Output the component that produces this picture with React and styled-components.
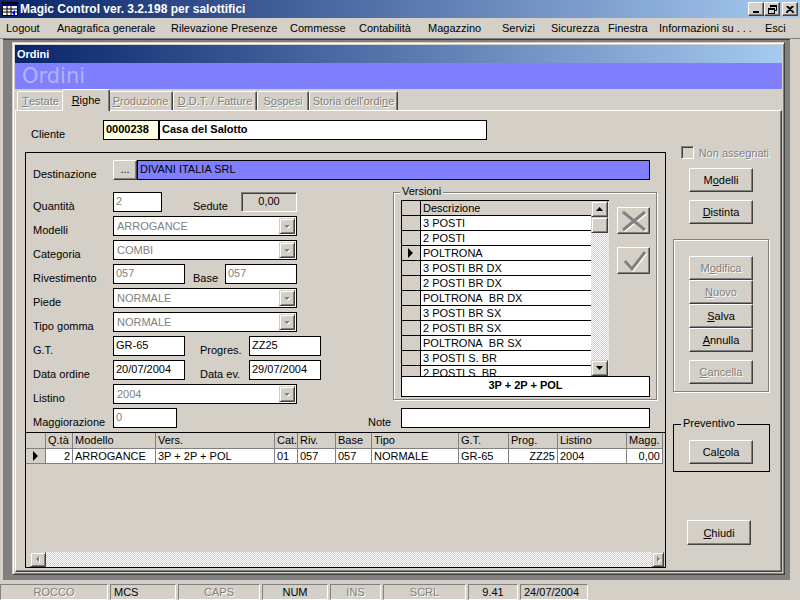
import React from "react";
import styled, { createGlobalStyle } from "styled-components";

const GlobalStyle = createGlobalStyle`
  html, body { margin: 0; padding: 0; background: #d4d0c8; }
  body { font-family: "Liberation Sans", Arial, sans-serif; font-size: 11px; color: #000; }
  * { box-sizing: border-box; }
  u { text-decoration: underline; text-underline-offset: 1px; }
`;

const Accel = ({ t, i }) =>
  i == null ? t : (<>{t.slice(0, i)}<u>{t[i]}</u>{t.slice(i + 1)}</>);

const Screen = styled.div`
  width: 800px;
  height: 600px;
  display: flex;
  flex-direction: column;
  overflow: hidden;
  background: #d4d0c8;
`;

const TitleBar = styled.div`
  height: 18px;
  display: flex;
  align-items: center;
  padding: 0 2px;
  background: linear-gradient(to right, #0a246a, #a6caf0);
`;

const TitleText = styled.div`
  flex: 1;
  margin-left: 2px;
  color: #fff;
  font-weight: bold;
  font-size: 12px;
  white-space: nowrap;
`;

const CapButton = styled.div`
  width: 16px;
  height: 14px;
  margin-left: ${p => p.$gap || 0}px;
  display: flex;
  align-items: center;
  justify-content: center;
  background: #d4d0c8;
  border: 1px solid;
  border-color: #fff #404040 #404040 #fff;
  box-shadow: inset -1px -1px #808080;
`;

const MenuBar = styled.div`
  height: 21px;
  display: flex;
  align-items: center;
  border-bottom: 1px solid #808080;
`;

const MenuItem = styled.div`
  width: ${p => p.$w}px;
  padding-left: 6px;
  white-space: nowrap;
`;

const MdiArea = styled.div`
  flex: 1;
  display: flex;
  margin: 0 10px 0 3px;
  padding: 2px 5px 5px 9px;
  background: #808080;
  border-top: 1px solid #404040;
`;

const ChildWindow = styled.div`
  flex: 1;
  display: flex;
  flex-direction: column;
  padding: 2px;
  background: #d4d0c8;
  border: 1px solid;
  border-color: #d4d0c8 #404040 #404040 #d4d0c8;
  box-shadow: inset 1px 1px #fff, inset -1px -1px #808080;
`;

const ChildTitle = styled.div`
  height: 18px;
  padding-left: 2px;
  display: flex;
  align-items: center;
  color: #fff;
  font-weight: bold;
  background: linear-gradient(to right, #0a246a, #a6caf0);
`;

const Band = styled.div`
  height: 26px;
  padding-left: 7px;
  background: #8080ff;
  color: #b2b2ff;
  font-family: "DejaVu Sans", sans-serif;
  font-size: 21px;
  line-height: 26px;
`;

const TabStrip = styled.div`
  height: 21px;
  display: flex;
  align-items: flex-end;
  padding-left: 2px;
`;

const Tab = styled.div`
  position: relative;
  width: ${p => p.$w}px;
  height: ${p => (p.$active ? 22 : 19)}px;
  margin: 0 ${p => (p.$active ? -2 : 0)}px ${p => (p.$active ? -1 : 0)}px;
  z-index: ${p => (p.$active ? 1 : 0)};
  display: flex;
  align-items: ${p => (p.$active ? "flex-start" : "center")};
  padding-top: ${p => (p.$active ? 4 : 0)}px;
  justify-content: center;
  white-space: nowrap;
  background: #d4d0c8;
  border: 1px solid;
  border-bottom: none;
  border-color: #fff #404040 transparent #fff;
  border-radius: 2px 2px 0 0;
  box-shadow: inset -1px 0 #808080;
  color: ${p => (p.$active ? "#000" : "#808080")};
  text-shadow: ${p => (p.$active ? "none" : "1px 1px 0 #fff")};
`;

const Page = styled.div`
  flex: 1;
  display: flex;
  flex-direction: column;
  padding: 9px 0 0 9px;
  border: 1px solid;
  border-color: #fff #404040 #404040 #fff;
  box-shadow: inset -1px -1px #808080;
`;

const Row = styled.div`
  display: flex;
  height: ${p => p.$h || 20}px;
  margin-top: ${p => p.$mt || 0}px;
  padding-left: ${p => p.$pl || 0}px;
  padding-right: ${p => p.$pr || 0}px;
`;

const Label = styled.div`
  width: ${p => p.$w}px;
  margin-left: ${p => p.$ml || 0}px;
  padding-top: 8px;
  line-height: 13px;
  white-space: nowrap;
`;

const Field = styled.div`
  width: ${p => p.$w}px;
  height: 20px;
  margin-left: ${p => p.$ml || 0}px;
  padding: 2px 0 0 2px;
  line-height: 13px;
  border: 1px solid #000;
  background: ${p => p.$bg || "#fff"};
  color: ${p => (p.$dim ? "#808080" : "#000")};
  font-weight: ${p => (p.$bold ? "bold" : "normal")};
  white-space: nowrap;
  overflow: hidden;
`;

const Readout = styled.div`
  width: ${p => p.$w}px;
  height: 20px;
  padding-top: 2px;
  text-align: center;
  line-height: 13px;
  border: 1px solid;
  border-color: #808080 #fff #fff #808080;
  box-shadow: inset 1px 1px #404040;
`;

const ComboBox = styled.div`
  width: ${p => p.$w}px;
  height: 20px;
  display: flex;
  justify-content: space-between;
  padding: 1px;
  border: 1px solid #000;
  background: #fff;
  color: #808080;
`;

const ComboText = styled.div`
  padding: 2px 0 0 2px;
  line-height: 13px;
`;

const ComboArrow = styled.div`
  width: 16px;
  height: 16px;
  display: flex;
  align-items: center;
  justify-content: center;
  background: #d4d0c8;
  border: 1px solid;
  border-color: #d4d0c8 #404040 #404040 #d4d0c8;
  box-shadow: inset 1px 1px #fff, inset -1px -1px #808080;
`;

const MainRow = styled.div`
  display: flex;
  margin-top: 6px;
`;

const LeftBox = styled.div`
  width: 641px;
  height: 416px;
  margin-top: 6px;
  display: flex;
  flex-direction: column;
  border: 1px solid #000;
`;

const DotsButton = styled.div`
  width: 24px;
  height: 20px;
  display: flex;
  align-items: center;
  justify-content: center;
  padding-bottom: 3px;
  background: #d4d0c8;
  border: 1px solid;
  border-color: #fff #404040 #404040 #fff;
  box-shadow: inset -1px -1px #808080;
`;

const MidRow = styled.div`
  display: flex;
  height: 219px;
  margin-top: 5px;
`;

const FormCol = styled.div`
  width: 367px;
  padding: 7px 0 0 7px;
  display: flex;
  flex-direction: column;
  gap: 4px;
`;

const GroupBox = styled.div`
  position: relative;
  width: ${p => p.$w}px;
  height: ${p => (p.$h ? `${p.$h}px` : "auto")};
  margin-top: ${p => p.$mt || 0}px;
  padding: ${p => p.$pad};
  display: flex;
  flex-direction: column;
  border: 1px solid ${p => (p.$black ? "#000" : "#808080")};
  box-shadow: ${p => (p.$black ? "none" : "inset 1px 1px #fff, 1px 1px #fff")};
`;

const Legend = styled.div`
  position: absolute;
  top: -8px;
  left: ${p => p.$left}px;
  padding: 0 2px;
  line-height: 13px;
  background: #d4d0c8;
`;

const VersTop = styled.div`
  display: flex;
  height: 176px;
`;

const List = styled.div`
  width: 208px;
  display: flex;
  overflow: hidden;
  border-top: 1px solid #000;
  border-left: 1px solid #000;
`;

const ListBody = styled.div`
  flex: 1;
  display: flex;
  flex-direction: column;
`;

const ListRow = styled.div`
  display: flex;
  flex: none;
  height: 15px;
  border-bottom: 1px solid #000;
`;

const Indicator = styled.div`
  width: ${p => p.$w || 19}px;
  flex: none;
  display: flex;
  align-items: center;
  justify-content: center;
  background: #d4d0c8;
  border-right: 1px solid ${p => p.$line || "#000"};
  border-bottom: ${p => (p.$under ? "1px solid #808080" : "none")};
`;

const ListCell = styled.div`
  flex: 1;
  padding-left: 2px;
  line-height: 14px;
  white-space: nowrap;
  background: ${p => (p.$head ? "#d4d0c8" : "#fff")};
`;

const VScroll = styled.div`
  width: 18px;
  display: flex;
  flex-direction: column;
  background: repeating-conic-gradient(#d4d0c8 0% 25%, #fff 0% 50%) 0 0 / 2px 2px;
`;

const ScrollBtn = styled.div`
  width: ${p => p.$w || 17}px;
  height: ${p => p.$h || 16}px;
  display: flex;
  align-items: center;
  justify-content: center;
  background: #d4d0c8;
  border: 1px solid;
  border-color: #d4d0c8 #404040 #404040 #d4d0c8;
  box-shadow: inset 1px 1px #fff, inset -1px -1px #808080;
`;

const Track = styled.div`
  flex: 1;
`;

const SideButtons = styled.div`
  display: flex;
  flex-direction: column;
  gap: 13px;
  padding: 7px 0 0 8px;
`;

const IconButton = styled.div`
  width: 33px;
  height: 27px;
  display: flex;
  align-items: center;
  justify-content: center;
  background: #d4d0c8;
  border: 1px solid;
  border-color: #fff #404040 #404040 #fff;
  box-shadow: inset -1px -1px #808080;
`;

const Summary = styled.div`
  width: 249px;
  height: 21px;
  border: 1px solid #000;
  background: #fff;
  font-weight: bold;
  text-align: center;
  line-height: 17px;
`;

const Grid = styled.div`
  flex: 1;
  display: flex;
  flex-direction: column;
  margin-top: 4px;
  border-top: 1px solid #000;
`;

const GridRow = styled.div`
  display: flex;
  height: ${p => p.$h}px;
`;

const GridCell = styled.div`
  width: ${p => p.$w}px;
  padding: 0 2px;
  line-height: ${p => p.$h - 1}px;
  text-align: ${p => (p.$right ? "right" : "left")};
  white-space: nowrap;
  overflow: hidden;
  background: ${p => (p.$head ? "#d4d0c8" : "#fff")};
  border-right: 1px solid #808080;
  border-bottom: 1px solid #808080;
`;

const GridFill = styled.div`
  flex: 1;
`;

const HScroll = styled.div`
  height: 15px;
  display: flex;
  margin: 0 1px 0 4px;
  background: repeating-conic-gradient(#d4d0c8 0% 25%, #fff 0% 50%) 0 0 / 2px 2px;
`;

const RightCol = styled.div`
  width: 96px;
  margin-left: 7px;
  display: flex;
  flex-direction: column;
`;

const CheckRow = styled.div`
  display: flex;
  align-items: center;
  gap: 5px;
  height: 13px;
  padding-left: 8px;
  color: #808080;
  text-shadow: 1px 1px 0 #fff;
  white-space: nowrap;
`;

const CheckBox = styled.div`
  width: 13px;
  height: 13px;
  background: #d4d0c8;
  border: 1px solid;
  border-color: #808080 #fff #fff #808080;
  box-shadow: inset 1px 1px #404040, inset -1px -1px #d4d0c8;
`;

const Button = styled.div`
  width: 64px;
  height: ${p => p.$h || 24}px;
  flex: none;
  margin-left: ${p => p.$ml ?? 15}px;
  margin-top: ${p => p.$mt || 0}px;
  display: flex;
  align-items: center;
  justify-content: center;
  background: #d4d0c8;
  border: 1px solid;
  border-color: #fff #404040 #404040 #fff;
  box-shadow: inset -1px -1px #808080;
  color: ${p => (p.$off ? "#808080" : "#000")};
  text-shadow: ${p => (p.$off ? "1px 1px 0 #fff" : "none")};
  white-space: nowrap;
`;

const StatusBar = styled.div`
  height: 18px;
  margin-top: 2px;
  padding-top: 2px;
  display: flex;
  gap: 2px;
`;

const Panel = styled.div`
  width: ${p => p.$w}px;
  height: 16px;
  padding-left: ${p => (p.$left ? 3 : 0)}px;
  text-align: ${p => (p.$left ? "left" : "center")};
  line-height: 14px;
  border: 1px solid;
  border-color: #808080 #fff #fff #808080;
  color: ${p => (p.$off ? "#808080" : "#000")};
  text-shadow: ${p => (p.$off ? "1px 1px 0 #fff" : "none")};
  white-space: nowrap;
`;

const Tri = ({ dir }) => {
  const pts = {
    up: "0,4 3.5,0 7,4",
    down: "0,0 3.5,4 7,0",
  }[dir];
  return (
    <svg width="7" height="4" viewBox="0 0 7 4" style={{ display: "block" }}>
      <polygon points={pts} fill="#000" />
    </svg>
  );
};

const RowMark = () => (
  <svg width="6" height="10" viewBox="0 0 6 10" style={{ display: "block" }}>
    <polygon points="0,0 5,5 0,10" fill="#000" />
  </svg>
);

const DimTri = ({ dir }) => (
  <svg width="9" height="9" viewBox="0 0 9 9" style={{ display: "block" }}>
    {dir === "down" && (<>
      <polygon points="2,4 8,4 5,7" fill="#fff" />
      <polygon points="1,3 7,3 4,6" fill="#808080" />
    </>)}
    {dir === "left" && (<>
      <polygon points="6,2 6,8 3,5" fill="#fff" />
      <polygon points="5,1 5,7 2,4" fill="#808080" />
    </>)}
    {dir === "right" && (<>
      <polygon points="4,2 4,8 7,5" fill="#fff" />
      <polygon points="3,1 3,7 6,4" fill="#808080" />
    </>)}
  </svg>
);

const Combo = ({ w, text }) => (
  <ComboBox $w={w}>
    <ComboText>{text}</ComboText>
    <ComboArrow><DimTri dir="down" /></ComboArrow>
  </ComboBox>
);

const AppIcon = () => (
  <svg width="16" height="14" viewBox="0 0 16 14">
    <rect x="0.5" y="0.5" width="15" height="13" fill="#fff" stroke="#000" />
    <rect x="1" y="1" width="14" height="3" fill="#000080" />
    <path d="M1 7H15M1 10H15M5 4V13M9 4V13" stroke="#000" />
    <path d="M10 11l3-3v6z" fill="#0000ff" />
  </svg>
);

const menu = [
  ["Logout", 51], ["Anagrafica generale", 114], ["Rilevazione Presenze", 119],
  ["Commesse", 69], ["Contabilità", 69], ["Magazzino", 74], ["Servizi", 49],
  ["Sicurezza", 57], ["Finestra", 51], ["Informazioni su . . .", 106], ["Esci", 35],
];

const tabs = [
  ["Testate", 47, 0], ["Righe", 48, 0, true], ["Produzione", 65, 0],
  ["D.D.T. / Fatture", 84, 0], ["Sospesi", 52, 1], ["Storia dell'ordine", 89, 16],
];

const versions = [
  "3 POSTI", "2 POSTI", "POLTRONA", "3 POSTI BR DX", "2 POSTI BR DX",
  "POLTRONA  BR DX", "3 POSTI BR SX", "2 POSTI BR SX", "POLTRONA  BR SX",
  "3 POSTI S. BR", "2 POSTI S. BR.",
];

const columns = [
  { w: 27, h: "Q.tà", v: "2", r: true },
  { w: 83, h: "Modello", v: "ARROGANCE" },
  { w: 119, h: "Vers.", v: "3P + 2P + POL" },
  { w: 23, h: "Cat.", v: "01" },
  { w: 38, h: "Riv.", v: "057" },
  { w: 36, h: "Base", v: "057" },
  { w: 87, h: "Tipo", v: "NORMALE" },
  { w: 50, h: "G.T.", v: "GR-65" },
  { w: 49, h: "Prog.", v: "ZZ25", r: true },
  { w: 69, h: "Listino", v: "2004" },
  { w: 36, h: "Magg.", v: "0,00", r: true },
];

const status = [
  ["ROCCO", 108, true], ["MCS", 66, false, true], ["CAPS", 82, true],
  ["NUM", 66], ["INS", 51, true], ["SCRL", 83, true], ["9.41", 50],
  ["24/07/2004", 68, false, true],
];

// keep the double spaces of the version names
const keepSpaces = s => s.replace(/ /g, "\u00a0");

export default function App() {
  return (
    <Screen>
      <GlobalStyle />
      <TitleBar>
        <AppIcon />
        <TitleText>Magic Control ver. 3.2.198 per salottifici</TitleText>
        <CapButton>
          <svg width="8" height="7" viewBox="0 0 8 7"><rect x="1" y="5" width="6" height="2" fill="#000" /></svg>
        </CapButton>
        <CapButton>
          <svg width="9" height="9" viewBox="0 0 9 9">
            <path d="M2.5 2.5V0.5H8.5V5.5H6.5" fill="none" stroke="#000" />
            <rect x="2" y="0" width="7" height="2" fill="#000" />
            <rect x="0.5" y="3.5" width="6" height="5" fill="none" stroke="#000" />
            <rect x="0" y="3" width="7" height="2" fill="#000" />
          </svg>
        </CapButton>
        <CapButton $gap={2}>
          <svg width="8" height="7" viewBox="0 0 8 7">
            <path d="M0.5 0L7.5 7M1.5 0L8 6.5M7.5 0L0.5 7M6.5 0L0 6.5" stroke="#000" strokeWidth="1.2" />
          </svg>
        </CapButton>
      </TitleBar>

      <MenuBar>
        {menu.map(([t, w]) => <MenuItem key={t} $w={w}>{t}</MenuItem>)}
      </MenuBar>

      <MdiArea>
        <ChildWindow>
          <ChildTitle>Ordini</ChildTitle>
          <Band>Ordini</Band>
          <TabStrip>
            {tabs.map(([t, w, i, a]) => (
              <Tab key={t} $w={w} $active={a}><Accel t={t} i={i} /></Tab>
            ))}
          </TabStrip>
          <Page>
            <Row>
              <Label $w={72} $ml={6}>Cliente</Label>
              <Field $w={56} $bg="#ffffe1" $bold>0000238</Field>
              <Field $w={328} $bold>Casa del Salotto</Field>
            </Row>

            <MainRow>
              <LeftBox>
                <Row $mt={7} $pl={7}>
                  <Label $w={80}>Destinazione</Label>
                  <DotsButton>...</DotsButton>
                  <Field $w={513} $bg="#8080ff">DIVANI ITALIA SRL</Field>
                </Row>

                <MidRow>
                  <FormCol>
                    <Row>
                      <Label $w={80}>Quantità</Label>
                      <Field $w={49} $dim>2</Field>
                      <Label $w={48} $ml={31}>Sedute</Label>
                      <Readout $w={56}>0,00</Readout>
                    </Row>
                    <Row><Label $w={80}>Modelli</Label><Combo w={184} text="ARROGANCE" /></Row>
                    <Row><Label $w={80}>Categoria</Label><Combo w={184} text="COMBI" /></Row>
                    <Row>
                      <Label $w={80}>Rivestimento</Label>
                      <Field $w={72} $dim>057</Field>
                      <Label $w={32} $ml={8}>Base</Label>
                      <Field $w={72} $dim>057</Field>
                    </Row>
                    <Row><Label $w={80}>Piede</Label><Combo w={184} text="NORMALE" /></Row>
                    <Row><Label $w={80}>Tipo gomma</Label><Combo w={184} text="NORMALE" /></Row>
                    <Row>
                      <Label $w={80}>G.T.</Label>
                      <Field $w={72}>GR-65</Field>
                      <Label $w={49} $ml={15}>Progres.</Label>
                      <Field $w={72}>ZZ25</Field>
                    </Row>
                    <Row>
                      <Label $w={80}>Data ordine</Label>
                      <Field $w={72}>20/07/2004</Field>
                      <Label $w={49} $ml={15}>Data ev.</Label>
                      <Field $w={72}>29/07/2004</Field>
                    </Row>
                    <Row><Label $w={80}>Listino</Label><Combo w={184} text="2004" /></Row>
                  </FormCol>

                  <GroupBox $w={264} $h={208} $mt={7} $pad="7px 0 0 7px">
                    <Legend $left={6}>Versioni</Legend>
                    <VersTop>
                      <List>
                        <ListBody>
                          <ListRow>
                            <Indicator />
                            <ListCell $head>Descrizione</ListCell>
                          </ListRow>
                          {versions.map((v, i) => (
                            <ListRow key={i}>
                              <Indicator>{i === 2 && <RowMark />}</Indicator>
                              <ListCell>{keepSpaces(v)}</ListCell>
                            </ListRow>
                          ))}
                        </ListBody>
                        <VScroll>
                          <ScrollBtn><Tri dir="up" /></ScrollBtn>
                          <ScrollBtn />
                          <Track />
                          <ScrollBtn><Tri dir="down" /></ScrollBtn>
                        </VScroll>
                      </List>
                      <SideButtons>
                        <IconButton>
                          <svg width="29" height="23" viewBox="0 0 29 23">
                            <path d="M4 3L26 21M26 3L4 21" stroke="#fff" strokeWidth="3" transform="translate(1 1)" />
                            <path d="M4 3L26 21M26 3L4 21" stroke="#808080" strokeWidth="3" />
                          </svg>
                        </IconButton>
                        <IconButton>
                          <svg width="29" height="23" viewBox="0 0 29 23">
                            <path d="M6 12L13 20L26 3" fill="none" stroke="#fff" strokeWidth="3" transform="translate(1 1)" />
                            <path d="M6 12L13 20L26 3" fill="none" stroke="#808080" strokeWidth="3" />
                          </svg>
                        </IconButton>
                      </SideButtons>
                    </VersTop>
                    <Summary>3P + 2P + POL</Summary>
                  </GroupBox>
                </MidRow>

                <Row $mt={4} $pl={7} $pr={15}>
                  <Label $w={80}>Maggiorazione</Label>
                  <Field $w={64} $dim>0</Field>
                  <Label $w={33} $ml={191}>Note</Label>
                  <Field $w={249} />
                </Row>

                <Grid>
                  <GridRow $h={16}>
                    <Indicator $w={20} $line="#808080" $under />
                    {columns.map(c => <GridCell key={c.h} $w={c.w} $h={16} $head>{c.h}</GridCell>)}
                  </GridRow>
                  <GridRow $h={15}>
                    <Indicator $w={20} $line="#808080" $under><RowMark /></Indicator>
                    {columns.map(c => <GridCell key={c.h} $w={c.w} $h={15} $right={c.r}>{c.v}</GridCell>)}
                  </GridRow>
                  <GridFill />
                  <HScroll>
                    <ScrollBtn $w={16} $h={15}><DimTri dir="left" /></ScrollBtn>
                    <Track />
                    <ScrollBtn $w={12} $h={15}><DimTri dir="right" /></ScrollBtn>
                  </HScroll>
                </Grid>
              </LeftBox>

              <RightCol>
                <CheckRow><CheckBox />Non assegnati</CheckRow>
                <Button $mt={9} $ml={16}><Accel t="Modelli" i={1} /></Button>
                <Button $mt={8} $ml={16}><Accel t="Distinta" i={0} /></Button>
                <GroupBox $w={96} $mt={15} $pad="16px 0 7px">
                  <Button $off><Accel t="Modifica" i={1} /></Button>
                  <Button $off><Accel t="Nuovo" i={0} /></Button>
                  <Button><Accel t="Salva" i={0} /></Button>
                  <Button><Accel t="Annulla" i={0} /></Button>
                  <Button $off $mt={8}><Accel t="Cancella" i={0} /></Button>
                </GroupBox>
                <GroupBox $w={97} $mt={32} $pad="15px 0 7px" $black>
                  <Legend $left={7}>Preventivo</Legend>
                  <Button><Accel t="Calcola" i={3} /></Button>
                </GroupBox>
                <Button $mt={48} $ml={14} $h={25}><Accel t="Chiudi" i={0} /></Button>
              </RightCol>
            </MainRow>
          </Page>
        </ChildWindow>
      </MdiArea>

      <StatusBar>
        {status.map(([t, w, off, left]) => (
          <Panel key={t} $w={w} $off={off} $left={left}>{t}</Panel>
        ))}
      </StatusBar>
    </Screen>
  );
}
